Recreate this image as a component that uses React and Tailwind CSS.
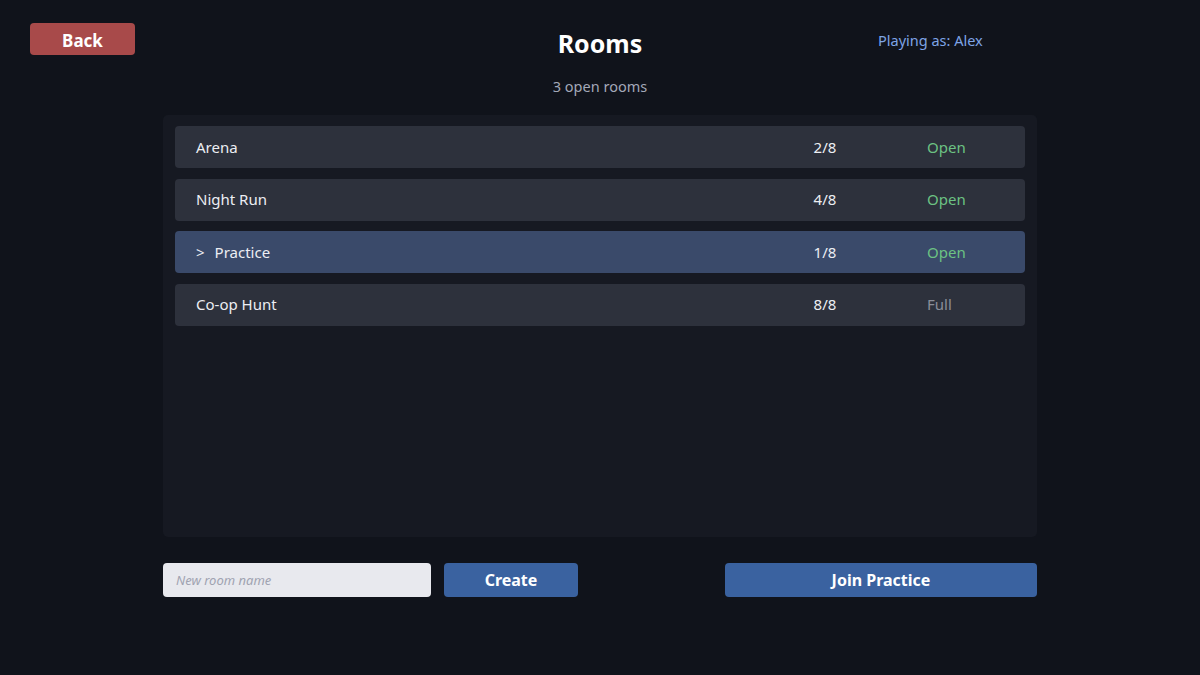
import { useState } from 'react';

const rooms = [
  { id: 1, name: 'Arena', players: 2, max: 8 },
  { id: 2, name: 'Night Run', players: 4, max: 8 },
  { id: 3, name: 'Practice', players: 1, max: 8 },
  { id: 4, name: 'Co-op Hunt', players: 8, max: 8 },
];

export default function App() {
  const [selected, setSelected] = useState(3);
  const [newName, setNewName] = useState('');

  const selectedRoom = rooms.find((r) => r.id === selected);
  const openCount = rooms.filter((r) => r.players < r.max).length;

  return (
    <div
      className="relative w-[1200px] h-[675px] bg-[#10131b] text-white overflow-hidden"
      style={{ fontFamily: '"Noto Sans", "Open Sans", sans-serif' }}
    >
      {/* header */}
      <button className="absolute left-[30px] top-[23px] w-[105px] h-[32px] rounded-[4px] bg-[#a84a4a] pt-[2px] text-[17px] font-bold text-white leading-none">
        Back
      </button>
      <div className="absolute left-[878px] top-[30px] text-[14.5px] text-[#7ea4e6]">Playing as: Alex</div>

      <div className="flex flex-col items-center pt-[27px]">
        <h1 className="text-[25px] font-bold leading-[32px]">Rooms</h1>
        <p className="mt-[16px] text-[14.5px] text-[#a3a8b8] leading-[22px]">{openCount} open rooms</p>
      </div>

      {/* room list */}
      <div className="mx-[163px] mt-[18px] h-[422px] rounded-[5px] bg-[#161922] px-[12px] pt-[11px] flex flex-col gap-[10.5px]">
        {rooms.map((room) => {
          const isSel = room.id === selected;
          const full = room.players >= room.max;
          return (
            <div
              key={room.id}
              onClick={() => setSelected(room.id)}
              className={`flex items-center h-[42px] rounded-[4px] pl-[21px] pr-[21px] text-[15px] cursor-pointer ${
                isSel ? 'bg-[#3a4a6a]' : 'bg-[#2d313c]'
              }`}
            >
              <span className="flex-1 text-[#eceef3]">
                {isSel ? <span className="mr-[10px]">&gt;</span> : null}
                {room.name}
              </span>
              <span className="w-[80px] text-center text-[#eceef3]">
                {room.players}/{room.max}
              </span>
              <span className={`ml-[62px] w-[77px] ${full ? 'text-[#8a8d98]' : 'text-[#6cc283]'}`}>
                {full ? 'Full' : 'Open'}
              </span>
            </div>
          );
        })}
      </div>

      {/* footer */}
      <div className="flex items-center mx-[163px] mt-[26px] h-[34px]">
        <input
          value={newName}
          onChange={(e) => setNewName(e.target.value)}
          placeholder="New room name"
          className="w-[268px] h-[34px] rounded-[4px] bg-[#e8e9ee] px-[13px] text-[13px] text-[#1f2937] placeholder:italic placeholder:text-[#a0a3b1] outline-none"
        />
        <button className="ml-[13px] w-[134px] h-[34px] rounded-[4px] bg-[#3a62a0] text-[16px] font-bold text-white">
          Create
        </button>
        <button className="ml-auto w-[312px] h-[34px] rounded-[4px] bg-[#3a62a0] text-[16px] font-bold text-white">
          Join {selectedRoom ? selectedRoom.name : ''}
        </button>
      </div>
    </div>
  );
}
